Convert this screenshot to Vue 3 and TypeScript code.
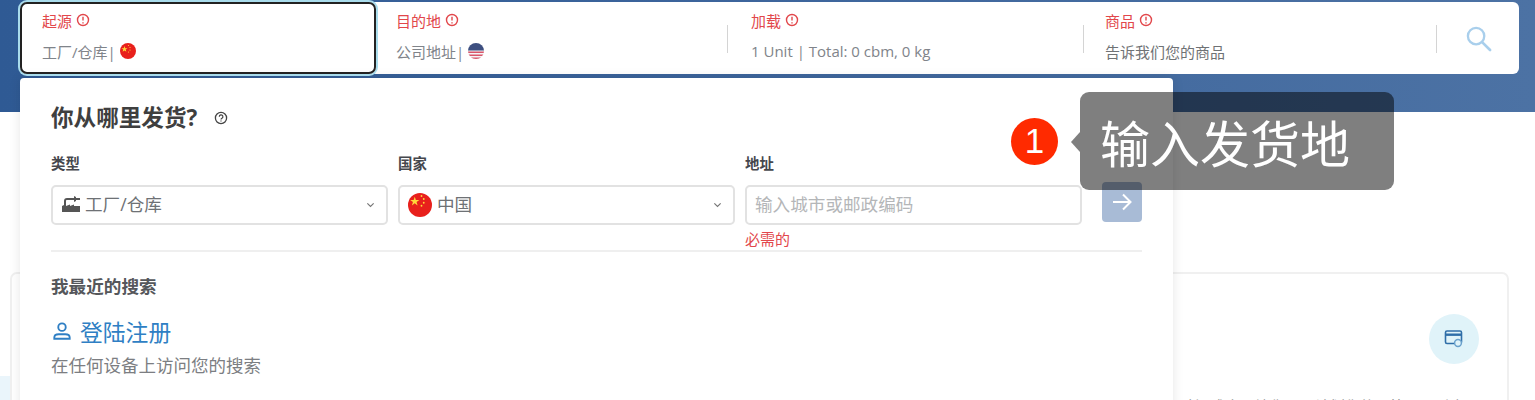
<template>
  <div class="page">
    <header class="band">
      <div class="bar">
        <div v-for="seg in segments" :key="seg.label" class="seg" :class="seg.cls">
          <div class="seg-label">
            <span>{{ seg.label }}</span>
            <svg class="warn" viewBox="0 0 14 14">
              <circle cx="7" cy="7" r="5.5" fill="none" stroke="currentColor" stroke-width="1.4" />
              <path d="M7 3.8v3.8M7 9.2v1.2" stroke="currentColor" stroke-width="1.4" fill="none" />
            </svg>
          </div>
          <div class="seg-value">
            <span>{{ seg.value }}</span>
            <svg v-if="seg.flag === 'cn'" class="flag-sm" viewBox="0 0 32 32">
              <circle cx="16" cy="16" r="16" fill="#e8201c" />
              <path d="M9 6l1.500 4.400h4.600l-3.700 2.700 1.400 4.400L9 14.800l-3.800 2.700 1.400-4.400-3.700-2.700h4.600z" fill="#ffd83a" />
              <circle cx="17" cy="5" r="1.200" fill="#ffd83a" />
              <circle cx="20" cy="9" r="1.200" fill="#ffd83a" />
              <circle cx="20" cy="14" r="1.200" fill="#ffd83a" />
              <circle cx="17" cy="18" r="1.200" fill="#ffd83a" />
            </svg>
            <svg v-if="seg.flag === 'us'" class="flag-sm" viewBox="0 0 32 32">
              <defs>
                <clipPath id="us-clip"><circle cx="16" cy="16" r="16" /></clipPath>
              </defs>
              <g clip-path="url(#us-clip)">
                <rect width="32" height="32" fill="#f4f4f6" />
                <rect y="17" width="32" height="3" fill="#d9556a" />
                <rect y="23" width="32" height="3" fill="#d9556a" />
                <rect y="29" width="32" height="3" fill="#d9556a" />
                <rect width="32" height="15" fill="#3d4f80" />
              </g>
            </svg>
          </div>
        </div>
        <div class="seg-search">
          <svg viewBox="0 0 28 28" class="search-icon">
            <circle cx="11.500" cy="11.500" r="8.500" fill="none" stroke="#a9cfec" stroke-width="2.400" />
            <path d="M18 18l8 8" stroke="#a9cfec" stroke-width="2.800" stroke-linecap="round" />
          </svg>
        </div>
      </div>
    </header>

    <section class="info-card">
      <div class="info-icon">
        <svg viewBox="0 0 20 20" width="20" height="20">
          <rect x="1.500" y="2" width="16" height="12.500" rx="1.500" fill="none" stroke="#2f6ea8" stroke-width="1.600" />
          <rect x="1.500" y="4.500" width="16" height="2.400" fill="#2f6ea8" />
          <circle cx="14" cy="14" r="3.400" fill="#e0f3f9" stroke="#6aa1cc" stroke-width="1.500" />
        </svg>
      </div>
      <p class="info-text">验证成本，让您可以计划您的预算，同时省</p>
    </section>
    <div class="corner-tint"></div>

    <div class="panel">
      <h2 class="panel-title">
        <span>你从哪里发货?</span>
        <svg class="help" viewBox="0 0 14 14">
          <circle cx="7" cy="7" r="5.600" fill="none" stroke="#444" stroke-width="1.300" />
          <path d="M5.300 5.700a1.800 1.800 0 1 1 2.700 1.500c-.7.400-1 .7-1 1.400" fill="none" stroke="#444" stroke-width="1.200" />
          <path d="M7 9.500v1.100" stroke="#444" stroke-width="1.200" />
        </svg>
      </h2>
      <div class="fields">
        <div class="field">
          <label>类型</label>
          <div class="control">
            <svg class="factory" viewBox="0 0 20 18">
              <path d="M1 17v-6l2-1V6c0-2 1-3 3-3h8v2H6c-.6 0-1 .4-1 1v5l4-1.500V11l4-1.500V11h6v6z" fill="#555" />
              <path d="M13 1l2 1v4l-2 1zM15 3h4v2h-4z" fill="#555" />
            </svg>
            <span>工厂/仓库</span>
            <svg class="chev" viewBox="0 0 10 6"><path d="M1.500 1.200L5 4.700l3.500-3.500" /></svg>
          </div>
        </div>
        <div class="field">
          <label>国家</label>
          <div class="control">
            <svg class="flag-lg" viewBox="0 0 32 32">
              <circle cx="16" cy="16" r="16" fill="#e8201c" />
              <path d="M9 5l1.500 4.400h4.600l-3.700 2.700 1.400 4.400L9 13.800l-3.800 2.700 1.400-4.400-3.700-2.700h4.600z" fill="#ffd83a" />
              <circle cx="18" cy="4" r="1.200" fill="#ffd83a" />
              <circle cx="21" cy="8" r="1.200" fill="#ffd83a" />
              <circle cx="21" cy="13" r="1.200" fill="#ffd83a" />
              <circle cx="18" cy="17" r="1.200" fill="#ffd83a" />
            </svg>
            <span>中国</span>
            <svg class="chev" viewBox="0 0 10 6"><path d="M1.500 1.200L5 4.700l3.500-3.500" /></svg>
          </div>
        </div>
        <div class="field">
          <label>地址</label>
          <div class="control">
            <span class="placeholder">输入城市或邮政编码</span>
          </div>
          <div class="error">必需的</div>
        </div>
        <button class="go" type="button">
          <svg viewBox="0 0 24 24" width="24" height="24">
            <path d="M3 12h17M13 4.500l7.500 7.500-7.500 7.500" fill="none" stroke="#fff" stroke-width="2" />
          </svg>
        </button>
      </div>
      <div class="divider"></div>
      <div class="recent-title">我最近的搜索</div>
      <div class="login">
        <svg viewBox="0 0 20 20" width="22" height="22">
          <circle cx="10" cy="6.500" r="3.400" fill="none" stroke="#2f7fc4" stroke-width="1.700" />
          <path d="M3 17v-1c0-2 2-3 4-3h6c2 0 4 1 4 3v1z" fill="none" stroke="#2f7fc4" stroke-width="1.700" />
        </svg>
        <span>登陆注册</span>
      </div>
      <div class="login-sub">在任何设备上访问您的搜索</div>
    </div>

    <div class="tip-wrap">
      <div class="step">1</div>
      <div class="tip">输入发货地</div>
    </div>
  </div>
</template>

<script setup lang="ts">
interface Segment {
  label: string
  value: string
  cls: string
  flag?: string
}

const segments: Segment[] = [
  { label: '起源', value: '工厂/仓库|', cls: 'seg-origin', flag: 'cn' },
  { label: '目的地', value: '公司地址|', cls: 'seg-dest', flag: 'us' },
  { label: '加载', value: '1 Unit | Total: 0 cbm, 0 kg', cls: 'seg-load' },
  { label: '商品', value: '告诉我们您的商品', cls: 'seg-goods' },
]
</script>

<style>
html,
body {
  margin: 0;
  background: #fff;
  overflow: hidden;
}
</style>

<style scoped>
.page {
  position: relative;
  width: 1535px;
  height: 400px;
  overflow: hidden;
  background: #fff;
  font-family: "Open Sans", "Noto Sans CJK SC", sans-serif;
}

.band {
  height: 112px;
  box-sizing: border-box;
  padding: 2px 16px 0 20px;
  background: linear-gradient(90deg, #2f5a94 0%, #3d659c 50%, #4c72a4 100%);
}

.bar {
  display: flex;
  height: 72px;
  background: #fff;
  border-radius: 6px;
}

.seg {
  position: relative;
  box-sizing: border-box;
  height: 72px;
  padding-top: 8px;
}

.seg-origin {
  width: 356px;
  padding-left: 22px;
  border-radius: 7px;
  box-shadow: inset 0 0 0 2px #222, 0 0 0 2px #a9dcec;
  z-index: 1;
}

.seg-dest {
  width: 351px;
  padding-left: 20px;
}

.seg-load {
  width: 356px;
  padding-left: 24px;
}

.seg-goods {
  width: 353px;
  padding-left: 22px;
}

.seg-load::before,
.seg-goods::before,
.seg-search::before {
  content: "";
  position: absolute;
  left: 0;
  top: 23px;
  height: 28px;
  width: 1px;
  background: #d4d4d4;
}

.seg-label {
  display: flex;
  align-items: center;
  gap: 4px;
  height: 20px;
  font-size: 15px;
  color: #e2474b;
}

.warn {
  width: 14px;
  height: 14px;
  color: #e2474b;
}

.seg-value {
  display: flex;
  align-items: center;
  gap: 4px;
  margin-top: 11px;
  height: 20px;
  font-size: 15px;
  color: #80848a;
}

.seg-goods .seg-value {
  color: #6f7275;
}

.flag-sm {
  width: 16px;
  height: 16px;
}

.seg-search {
  position: relative;
  flex: 1;
}

.search-icon {
  position: absolute;
  left: 29px;
  top: 23px;
  width: 27px;
  height: 27px;
}

.info-card {
  position: relative;
  box-sizing: border-box;
  width: 1499px;
  height: 200px;
  margin: 160px 0 0 10px;
  border: 2px solid #f0f0f0;
  border-radius: 7px;
}

.info-icon {
  position: absolute;
  left: 1417px;
  top: 40px;
  display: flex;
  align-items: center;
  justify-content: center;
  width: 50px;
  height: 50px;
  border-radius: 50%;
  background: #e0f3f9;
}

.info-text {
  position: absolute;
  left: 1168px;
  top: 121px;
  margin: 0;
  width: 325px;
  white-space: nowrap;
  overflow: hidden;
  font-size: 15px;
  color: #8a8a8a;
}

.corner-tint {
  position: absolute;
  left: 0;
  top: 376px;
  width: 10px;
  height: 24px;
  background: #eaf5fb;
}

.panel {
  position: absolute;
  left: 20px;
  top: 78px;
  box-sizing: border-box;
  width: 1153px;
  height: 340px;
  padding: 24px 31px 0;
  background: #fff;
  border-radius: 4px;
  box-shadow: 0 0 12px rgba(0, 0, 0, 0.1);
}

.panel-title {
  display: flex;
  align-items: center;
  gap: 17px;
  margin: 0;
  height: 28px;
  font-size: 22.600px;
  font-weight: 700;
  color: #3f3f3f;
}

.help {
  width: 14px;
  height: 14px;
  margin-top: 4px;
}

.fields {
  display: flex;
  gap: 10px;
  margin-top: 24px;
}

.field {
  width: 337px;
}

.field label {
  display: block;
  height: 20px;
  margin-bottom: 11px;
  font-size: 14.400px;
  line-height: 20px;
  font-weight: 700;
  color: #45474d;
}

.control {
  display: flex;
  align-items: center;
  box-sizing: border-box;
  height: 40px;
  padding: 0 8px 3px;
  border: 2px solid #e2e2e2;
  border-radius: 5px;
  font-size: 17.600px;
  color: #6e7175;
}

.factory {
  width: 20px;
  height: 18px;
  margin-right: 4px;
  flex: none;
}

.flag-lg {
  width: 24px;
  height: 24px;
  margin-right: 5px;
  flex: none;
  margin-top: 3px;
}

.chev {
  width: 9px;
  height: 6px;
  margin-left: auto;
  margin-right: 3px;
  margin-top: 3px;
  fill: none;
  stroke: #777;
  stroke-width: 1.300;
}

.placeholder {
  color: #b4b6b8;
}

.error {
  margin-top: 4px;
  height: 21px;
  font-size: 15px;
  line-height: 20px;
  color: #e2474b;
}

.go {
  display: flex;
  flex: none;
  align-items: center;
  justify-content: center;
  width: 40px;
  height: 40px;
  margin: 28px 0 0 10px;
  padding: 0;
  border: none;
  border-radius: 4px;
  background: #a8bbd6;
}

.divider {
  height: 2px;
  background: #efefef;
}

.recent-title {
  margin-top: 22px;
  height: 24px;
  font-size: 17.600px;
  line-height: 24px;
  font-weight: 700;
  color: #55575b;
}

.login {
  display: flex;
  align-items: center;
  gap: 7px;
  margin-top: 18px;
  height: 30px;
  font-size: 22.800px;
  color: #2f7fc4;
}

.login-sub {
  margin-top: 7px;
  font-size: 17.500px;
  line-height: 24px;
  color: #7c7e82;
}

.tip-wrap {
  position: absolute;
  left: 1011px;
  top: 92px;
  display: flex;
  align-items: center;
  gap: 22px;
}

.step {
  display: flex;
  align-items: center;
  justify-content: center;
  width: 47px;
  height: 47px;
  border-radius: 50%;
  background: #ff2a00;
  color: #fff;
  font-size: 35px;
  font-family: "Liberation Sans", sans-serif;
}

.tip {
  position: relative;
  box-sizing: border-box;
  width: 314px;
  height: 98px;
  padding: 0 20px;
  line-height: 98px;
  border-radius: 9px;
  background: rgba(0, 0, 0, 0.5);
  color: #fff;
  font-size: 50px;
  font-family: "Noto Sans CJK SC", sans-serif;
  white-space: nowrap;
}

.tip::before {
  content: "";
  position: absolute;
  left: -9px;
  top: 40px;
  border-top: 10px solid transparent;
  border-bottom: 10px solid transparent;
  border-right: 9px solid rgba(0, 0, 0, 0.5);
}
</style>
